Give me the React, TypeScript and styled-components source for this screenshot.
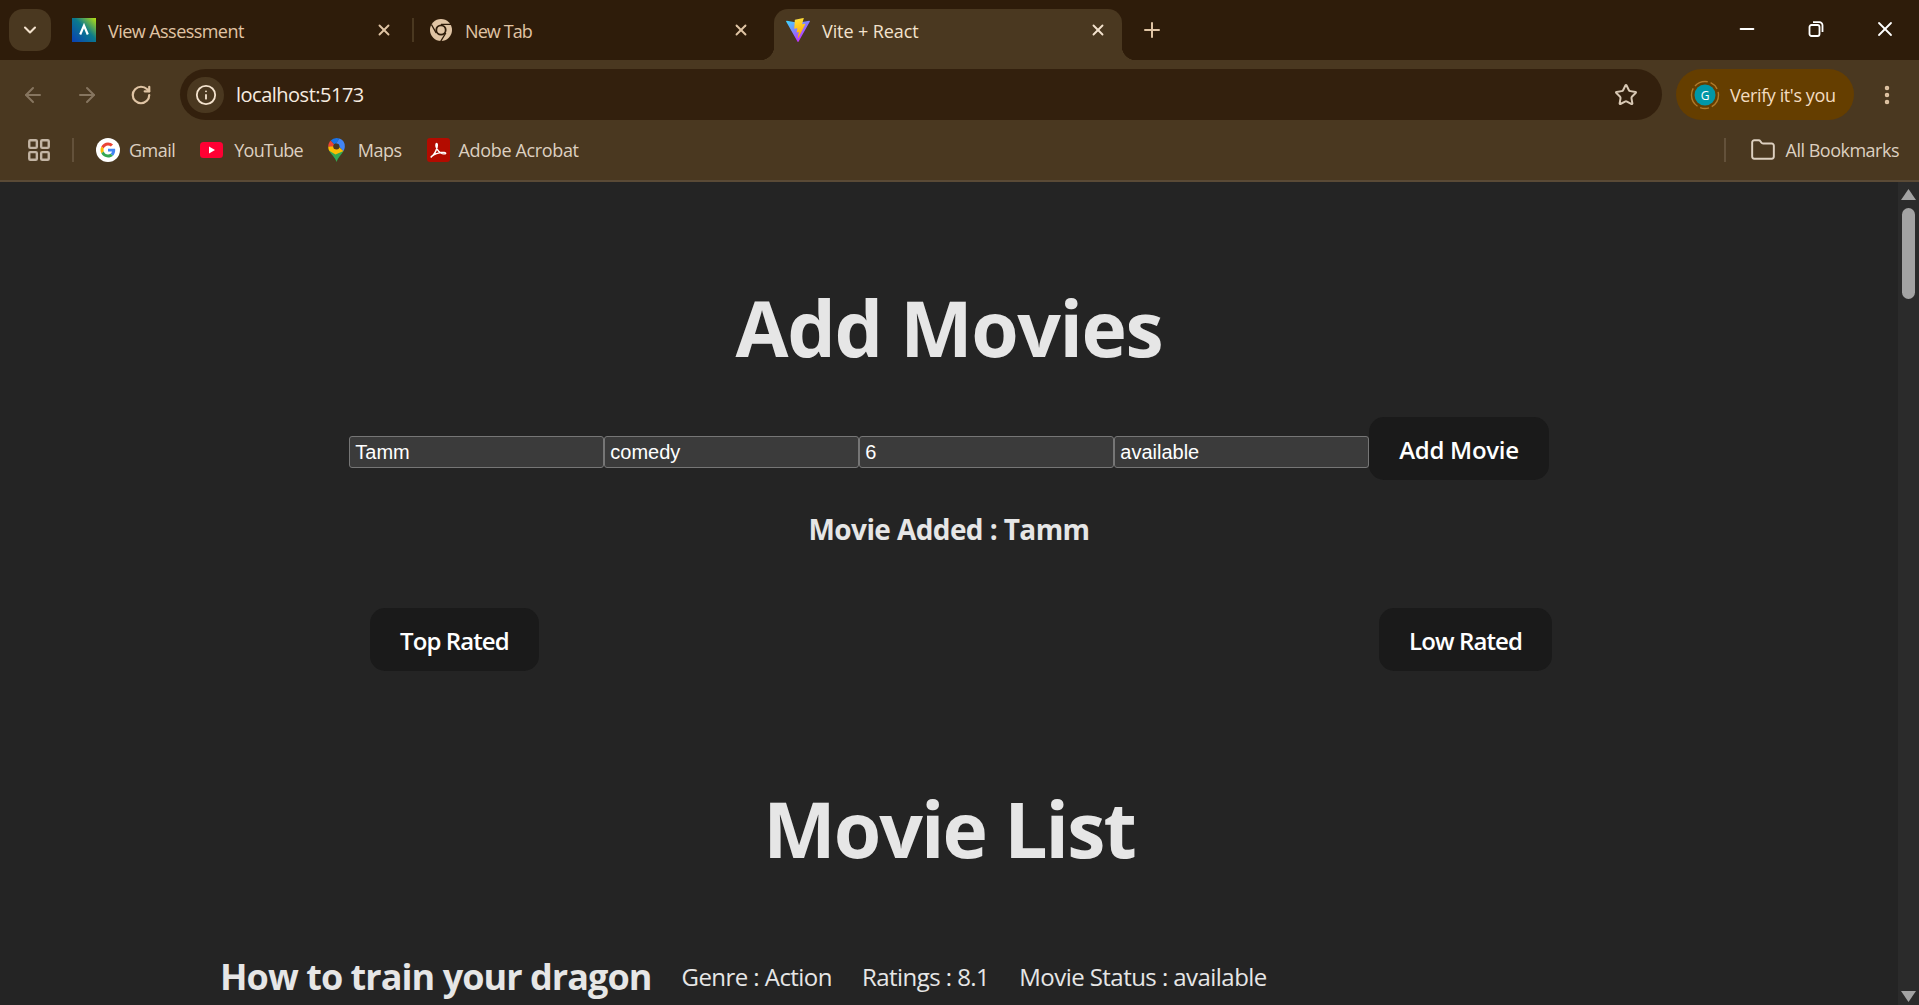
import { ChevronDown, X, Plus, Minus, ArrowLeft, ArrowRight, RotateCw, Info, Star, EllipsisVertical, LayoutGrid, Folder } from "lucide-react"
import styled, { createGlobalStyle } from "styled-components"

const GlobalStyle = createGlobalStyle`
	html, body {
		margin: 0;
		padding: 0;
		height: 100%;
		overflow: hidden;
		background: #242424;
	}
`

const Window = styled.div`
	display: flex;
	flex-direction: column;
	height: 100vh;
	font-family: "Open Sans", "Noto Sans", sans-serif;
	color: #e6e6e6;
`

const TabStrip = styled.div`
	display: flex;
	align-items: flex-start;
	height: 60px;
	padding-top: 9px;
	box-sizing: border-box;
	background: #2e1c0a;
	color: #e0c4a4;
`

const TabSearch = styled.button`
	display: flex;
	align-items: center;
	justify-content: center;
	width: 42px;
	height: 42px;
	margin: 0 9px;
	padding: 0;
	border: 0;
	border-radius: 14px;
	background: #4a3820;
	color: #f3e2cd;
`

const Tab = styled.div<{ $active?: boolean }>`
	position: relative;
	display: flex;
	align-items: center;
	width: 348px;
	height: ${(p) => (p.$active ? "51px" : "42px")};
	padding: ${(p) => (p.$active ? "0 12px 9px" : "0 12px")};
	box-sizing: border-box;
	border-radius: 14px 14px 0 0;
	background: ${(p) => (p.$active ? "#4a3820" : "transparent")};
	color: ${(p) => (p.$active ? "#f3e2cd" : "#e0c4a4")};

	${(p) =>
		p.$active &&
		`
		&::before, &::after {
			content: "";
			position: absolute;
			bottom: 0;
			width: 14px;
			height: 14px;
		}
		&::before {
			left: -14px;
			background: radial-gradient(circle at 0 0, transparent 14px, #4a3820 14.5px);
		}
		&::after {
			right: -14px;
			background: radial-gradient(circle at 100% 0, transparent 14px, #4a3820 14.5px);
		}
	`}
`

const TabIcon = styled.span`
	display: flex;
	flex: none;
	width: 24px;
	height: 24px;
	margin-right: 12px;
`

const TabTitle = styled.span<{ $spacing?: number }>`
	flex: 1;
	padding-top: 2px;
	font-size: 18px;
	letter-spacing: ${(p) => p.$spacing ?? -0.55}px;
	white-space: nowrap;
`

const TabClose = styled.span`
	display: flex;
	margin-right: 3px;
`

const TabGap = styled.div<{ $line?: boolean }>`
	flex: none;
	display: flex;
	justify-content: center;
	width: 9px;
	height: 42px;
	align-items: center;

	&::after {
		content: "";
		width: 2px;
		height: 24px;
		background: ${(p) => (p.$line ? "#4a3820" : "transparent")};
	}
`

const NewTabButton = styled.span`
	display: flex;
	align-items: center;
	height: 42px;
	margin-left: 18px;
`

const WindowControls = styled.div`
	display: flex;
	margin-left: auto;
	color: #fff;
`

const WindowControl = styled.span`
	display: flex;
	align-items: center;
	justify-content: center;
	width: 69px;
	height: 40px;
`

const Toolbar = styled.div`
	display: flex;
	align-items: center;
	height: 60px;
	padding: 9px 0 0 6px;
	box-sizing: border-box;
	background: #4a3820;
	color: #e0c4a4;
`

const NavButton = styled.span<{ $muted?: boolean }>`
	display: flex;
	align-items: center;
	justify-content: center;
	width: 54px;
	color: ${(p) => (p.$muted ? "#86755f" : "#e0c4a4")};
`

const Omnibox = styled.div`
	display: flex;
	align-items: center;
	width: 1482px;
	height: 51px;
	margin-left: 12px;
	padding: 0 24px 0 7px;
	box-sizing: border-box;
	border-radius: 26px;
	background: #33200d;
`

const SiteInfo = styled.span`
	display: flex;
	align-items: center;
	justify-content: center;
	width: 37px;
	height: 36px;
	border-radius: 18px;
	background: #4a3820;
	color: #f3e2cd;
`

const Url = styled.span`
	flex: 1;
	margin-left: 12px;
	font-size: 20px;
	letter-spacing: -0.5px;
	color: #f7ece0;
`

const StarButton = styled.span`
	display: flex;
	color: #d8c8b4;
`

const VerifyPill = styled.div`
	display: flex;
	align-items: center;
	width: 178px;
	height: 51px;
	margin-left: 14px;
	padding-left: 14px;
	box-sizing: border-box;
	border-radius: 26px;
	background: #653e00;
	color: #f3dcc0;
	font-size: 18px;
	letter-spacing: -0.4px;
`

const Avatar = styled.svg`
	flex: none;
	margin-right: 10px;
`

const MenuButton = styled.span`
	display: flex;
	margin-left: 21px;
	color: #e0c4a4;
`

const BookmarksBar = styled.div`
	display: flex;
	align-items: center;
	height: 62px;
	padding-left: 26px;
	padding-right: 20px;
	box-sizing: border-box;
	background: #4a3820;
	border-bottom: 2px solid #5a4a36;
	color: #ddd0c0;
	font-size: 18px;
	letter-spacing: -0.5px;
`

const AppsButton = styled.span`
	display: flex;
	color: #c3b5a4;
`

const BarDivider = styled.span<{ $end?: boolean }>`
	flex: none;
	width: 2px;
	height: 24px;
	margin: ${(p) => (p.$end ? "0 24px 0 22px" : "0 22px 0 20px")};
	background: #63513a;
`

const Bookmark = styled.span<{ $iconGap?: number; $spacing?: number }>`
	display: flex;
	align-items: center;
	gap: ${(p) => p.$iconGap ?? 9}px;
	margin-right: 25px;
	letter-spacing: ${(p) => p.$spacing ?? -0.5}px;
	white-space: nowrap;
`

const BookmarkIcon = styled.svg`
	flex: none;
`

const AllBookmarks = styled.span`
	display: flex;
	align-items: center;
	gap: 10px;
	margin-left: auto;
	white-space: nowrap;
`

const RightGroup = styled.div`
	display: flex;
	align-items: center;
	margin-left: auto;
`

const Viewport = styled.div`
	flex: 1;
	display: flex;
	min-height: 0;
	overflow: hidden;
	background: #242424;
`

const Page = styled.main`
	flex: 1;
	min-width: 0;
	padding-top: 104px;
	line-height: 1.5;
`

const Title = styled.h1<{ $top?: number; $spacing?: number }>`
	margin: ${(p) => p.$top ?? 0}px 0 0;
	font-size: 76.8px;
	font-weight: 700;
	line-height: 1.1;
	letter-spacing: ${(p) => p.$spacing ?? -1.4}px;
	text-align: center;
`

const AddForm = styled.form`
	display: flex;
	align-items: baseline;
	justify-content: center;
	margin-top: 47px;
`

const Field = styled.input`
	width: 255px;
	height: 32px;
	padding: 2px 5px 0;
	box-sizing: border-box;
	border: 1.5px solid #767676;
	border-radius: 3px;
	background: #3b3b3b;
	color: #fff;
	font-family: "Liberation Sans", Arial, sans-serif;
	font-size: 20px;
`

const Button = styled.button`
	height: 63px;
	padding: 2px 30px 0;
	border: 0;
	border-radius: 15px;
	background: #1a1a1a;
	color: #fff;
	font-family: inherit;
	font-size: 24px;
	font-weight: 600;
	letter-spacing: -0.9px;
`

const AddButton = styled(Button)`
	letter-spacing: -0.3px;
`

const Message = styled.h3`
	margin: 28px 0 0;
	font-size: 28px;
	font-weight: 700;
	letter-spacing: -0.6px;
	text-align: center;
`

const SortRow = styled.div`
	display: flex;
	justify-content: space-between;
	margin-top: 58px;
	padding: 0 346px 0 370px;
`

const MovieRow = styled.div`
	display: flex;
	align-items: center;
	margin-top: 78px;
	padding-left: 220px;
	white-space: nowrap;
`

const MovieName = styled.h2`
	margin: 0 30px 0 0;
	font-size: 36px;
	font-weight: 700;
	letter-spacing: -0.95px;
`

const MovieMeta = styled.span`
	margin-right: 30px;
	font-size: 24px;
	letter-spacing: -0.55px;
`

const Scrollbar = styled.div`
	flex: none;
	display: flex;
	flex-direction: column;
	align-items: center;
	width: 21px;
	padding: 7px 0 3px;
	box-sizing: border-box;
	background: #2b2b2b;
	color: #a3a3a3;
`

const ScrollThumb = styled.div`
	width: 13px;
	height: 91px;
	margin-top: 8px;
	border-radius: 7px;
	background: #a3a3a3;
`

const ScrollArrow = styled.svg<{ $bottom?: boolean }>`
	flex: none;
	margin-top: ${(p) => (p.$bottom ? "auto" : "0")};
`

function AssessmentIcon() {
	return (
		<svg width="24" height="24" viewBox="0 0 24 24">
			<defs>
				<linearGradient id="assess" x1="0" y1="1" x2="1" y2="0">
					<stop offset="0" stopColor="#0a3fb5" />
					<stop offset="0.55" stopColor="#0a7a8c" />
					<stop offset="1" stopColor="#b8e010" />
				</linearGradient>
			</defs>
			<rect width="24" height="24" fill="url(#assess)" />
			<path d="M8.2 16.5 12 7.5l3.8 9" fill="none" stroke="#fff" strokeWidth="2.2" />
		</svg>
	)
}

function ChromeIcon() {
	return (
		<svg width="24" height="24" viewBox="0 0 24 24">
			<circle cx="12" cy="12" r="11" fill="#e0c4a4" />
			<circle cx="12" cy="12" r="5.6" fill="#2e1c0a" />
			<circle cx="12" cy="12" r="3.8" fill="#e0c4a4" />
			<path d="M12 6.4h10M7.2 15 2.4 6.5M16.8 15l-5.2 8.5" stroke="#2e1c0a" strokeWidth="1.4" fill="none" />
		</svg>
	)
}

function ViteIcon() {
	return (
		<svg width="24" height="24" viewBox="0 0 256 257">
			<defs>
				<linearGradient id="viteA" x1="0" y1="0.1" x2="0.6" y2="0.9">
					<stop offset="0" stopColor="#41D1FF" />
					<stop offset="1" stopColor="#BD34FE" />
				</linearGradient>
				<linearGradient id="viteB" x1="0.4" y1="0" x2="0.55" y2="0.9">
					<stop offset="0" stopColor="#FFEA83" />
					<stop offset="0.08" stopColor="#FFDD35" />
					<stop offset="1" stopColor="#FFA800" />
				</linearGradient>
			</defs>
			<path fill="url(#viteA)" d="M255.153 37.938 134.897 252.976c-2.483 4.44-8.862 4.466-11.382.048L.875 37.958c-2.746-4.814 1.371-10.646 6.827-9.67l120.385 21.517a6.537 6.537 0 0 0 2.322-.004l117.867-21.483c5.438-.991 9.574 4.796 6.877 9.62Z" />
			<path fill="url(#viteB)" d="M185.432.063 96.44 17.501a3.268 3.268 0 0 0-2.634 3.014l-5.474 92.456a3.268 3.268 0 0 0 3.997 3.378l24.777-5.718c2.318-.535 4.413 1.507 3.936 3.838l-7.361 36.047c-.495 2.426 1.782 4.5 4.151 3.78l15.304-4.649c2.372-.72 4.652 1.36 4.15 3.788l-11.698 56.621c-.732 3.542 3.979 5.473 5.943 2.437l1.313-2.028 72.516-144.72c1.215-2.423-.88-5.186-3.54-4.672l-25.505 4.922c-2.396.462-4.435-1.77-3.759-4.114l16.646-57.705c.677-2.35-1.37-4.583-3.769-4.113Z" />
		</svg>
	)
}

function GoogleIcon() {
	return (
		<BookmarkIcon width="24" height="24" viewBox="0 0 24 24">
			<circle cx="12" cy="12" r="12" fill="#fff" />
			<g transform="translate(4.5 4.5) scale(0.3125)">
				<path fill="#EA4335" d="M24 9.5c3.54 0 6.71 1.22 9.21 3.6l6.85-6.85C35.9 2.38 30.47 0 24 0 14.62 0 6.51 5.38 2.56 13.22l7.98 6.19C12.43 13.72 17.74 9.5 24 9.5z" />
				<path fill="#4285F4" d="M46.98 24.55c0-1.57-.15-3.09-.38-4.55H24v9.02h12.94c-.58 2.96-2.26 5.48-4.78 7.18l7.73 6c4.51-4.18 7.09-10.36 7.09-17.65z" />
				<path fill="#FBBC05" d="M10.53 28.59c-.48-1.45-.76-2.99-.76-4.59s.27-3.14.76-4.59l-7.98-6.19C.92 16.46 0 20.12 0 24c0 3.88.92 7.54 2.56 10.78l7.97-6.19z" />
				<path fill="#34A853" d="M24 48c6.48 0 11.93-2.13 15.89-5.81l-7.73-6c-2.15 1.45-4.92 2.3-8.16 2.3-6.26 0-11.57-4.22-13.47-9.91l-7.98 6.19C6.51 42.62 14.62 48 24 48z" />
			</g>
		</BookmarkIcon>
	)
}

function YouTubeIcon() {
	return (
		<BookmarkIcon width="23" height="24" viewBox="0 0 23 24">
			<rect x="0" y="4" width="23" height="16" rx="3.5" fill="#ff0033" />
			<path d="M9 8.5 15 12l-6 3.5z" fill="#fff" />
		</BookmarkIcon>
	)
}

function MapsIcon() {
	return (
		<BookmarkIcon width="17" height="24" viewBox="0 0 17 24">
			<path d="M8.5 24C7.2 19.5 3.2 16.6 1.200 12.800L8.500 11l7 2c-2 3.800-5.700 6.500-7 11z" fill="#34a853" />
			<path d="M1.200 12.800A8.400 8.400 0 0 1 .2 8.500L5 7.500 6 11l5-2 4.500 4-8 3.500z" fill="#fbbc04" />
			<path d="M.2 8.500C.2 6 1.200 4 2.700 2.500L6 6 5.200 8.500z" fill="#ea4335" />
			<path d="M2.700 2.500A8.300 8.300 0 0 1 8.500 0c1 0 2 .2 3 .6L8 5.500 6 6z" fill="#1a73e8" />
			<path d="M11.500.6a8.300 8.300 0 0 1 5.300 7.900c0 1.600-.5 3.200-1.300 4.500L11 8.500 8 5.500z" fill="#4285f4" />
			<circle cx="8.500" cy="8.500" r="3" fill="#4a3820" />
		</BookmarkIcon>
	)
}

function AcrobatIcon() {
	return (
		<BookmarkIcon width="23" height="24" viewBox="0 0 23 24">
			<rect width="23" height="24" rx="3" fill="#b30b00" />
			<path
				d="M4.300 18.500c2.600-1.500 5-6 5.800-9.500.4-1.800.3-3.500-.5-3.500s-.9 2.100-.3 3.800c1 2.800 3.700 5.500 6 6.300 1.600.5 3.500.4 3.400-.4-.1-.9-2.400-1-4.400-.7-3.600.6-7.400 2-9.300 3.600-.8.700-.9 1.100-.7 1z"
				fill="none"
				stroke="#fff"
				strokeWidth="1.400"
			/>
		</BookmarkIcon>
	)
}

function VerifyAvatar() {
	return (
		<Avatar width="30" height="30" viewBox="0 0 30 30">
			<circle cx="15" cy="15" r="13.500" fill="none" stroke="#b07a2a" strokeWidth="1.400" strokeDasharray="14 3 9 3 20 3" />
			<circle cx="15" cy="15" r="10.500" fill="#0097a7" />
			<text x="15" y="19.500" textAnchor="middle" fontSize="12" fill="#fff" fontFamily="Open Sans, sans-serif">G</text>
		</Avatar>
	)
}

export default function App() {
	return (
		<Window>
			<GlobalStyle />
			<TabStrip>
				<TabSearch><ChevronDown size={20} strokeWidth={2.5} /></TabSearch>
				<Tab>
					<TabIcon><AssessmentIcon /></TabIcon>
					<TabTitle>View Assessment</TabTitle>
					<TabClose><X size={18} strokeWidth={2.5} /></TabClose>
				</Tab>
				<TabGap $line />
				<Tab>
					<TabIcon><ChromeIcon /></TabIcon>
					<TabTitle $spacing={-0.9}>New Tab</TabTitle>
					<TabClose><X size={18} strokeWidth={2.5} /></TabClose>
				</Tab>
				<TabGap />
				<Tab $active>
					<TabIcon><ViteIcon /></TabIcon>
					<TabTitle $spacing={-0.1}>Vite + React</TabTitle>
					<TabClose><X size={18} strokeWidth={2.5} /></TabClose>
				</Tab>
				<NewTabButton><Plus size={24} strokeWidth={2} /></NewTabButton>
				<WindowControls>
					<WindowControl><Minus size={22} strokeWidth={2} /></WindowControl>
					<WindowControl>
						<svg width="18" height="18" viewBox="0 0 18 18" fill="none" stroke="#fff" strokeWidth="1.800">
							<rect x="2.500" y="5" width="10" height="11" rx="2" />
							<path d="M6 2.200h6.500a3 3 0 0 1 3 3V12" />
						</svg>
					</WindowControl>
					<WindowControl><X size={24} strokeWidth={1.8} /></WindowControl>
				</WindowControls>
			</TabStrip>
			<Toolbar>
				<NavButton $muted><ArrowLeft size={24} strokeWidth={2} /></NavButton>
				<NavButton $muted><ArrowRight size={24} strokeWidth={2} /></NavButton>
				<NavButton><RotateCw size={22} strokeWidth={2.4} /></NavButton>
				<Omnibox>
					<SiteInfo><Info size={22} strokeWidth={2} /></SiteInfo>
					<Url>localhost:5173</Url>
					<StarButton><Star size={24} strokeWidth={2} /></StarButton>
				</Omnibox>
				<VerifyPill>
					<VerifyAvatar />
					Verify it's you
				</VerifyPill>
				<MenuButton><EllipsisVertical size={24} strokeWidth={2.5} /></MenuButton>
			</Toolbar>
			<BookmarksBar>
				<AppsButton><LayoutGrid size={26} strokeWidth={2.2} /></AppsButton>
				<BarDivider />
				<Bookmark><GoogleIcon />Gmail</Bookmark>
				<Bookmark $iconGap={11} $spacing={-0.8}><YouTubeIcon />YouTube</Bookmark>
				<Bookmark $iconGap={13}><MapsIcon />Maps</Bookmark>
				<Bookmark $spacing={-0.35}><AcrobatIcon />Adobe Acrobat</Bookmark>
				<RightGroup>
					<BarDivider $end />
					<AllBookmarks><Folder size={26} strokeWidth={1.8} />All Bookmarks</AllBookmarks>
				</RightGroup>
			</BookmarksBar>
			<Viewport>
				<Page>
					<Title>Add Movies</Title>
					<AddForm>
						<Field defaultValue="Tamm" />
						<Field defaultValue="comedy" />
						<Field defaultValue="6" />
						<Field defaultValue="available" />
						<AddButton type="button">Add Movie</AddButton>
					</AddForm>
					<Message>Movie Added : Tamm</Message>
					<SortRow>
						<Button type="button">Top Rated</Button>
						<Button type="button">Low Rated</Button>
					</SortRow>
					<Title $top={116} $spacing={-1.9}>Movie List</Title>
					<MovieRow>
						<MovieName>How to train your dragon</MovieName>
						<MovieMeta>Genre : Action</MovieMeta>
						<MovieMeta>Ratings : 8.1</MovieMeta>
						<MovieMeta>Movie Status : available</MovieMeta>
					</MovieRow>
				</Page>
				<Scrollbar>
					<ScrollArrow width="15" height="11" viewBox="0 0 15 11"><path d="M7.500 0 15 11H0z" fill="currentColor" /></ScrollArrow>
					<ScrollThumb />
					<ScrollArrow $bottom width="15" height="11" viewBox="0 0 15 11"><path d="M0 0h15L7.500 11z" fill="currentColor" /></ScrollArrow>
				</Scrollbar>
			</Viewport>
		</Window>
	)
}
